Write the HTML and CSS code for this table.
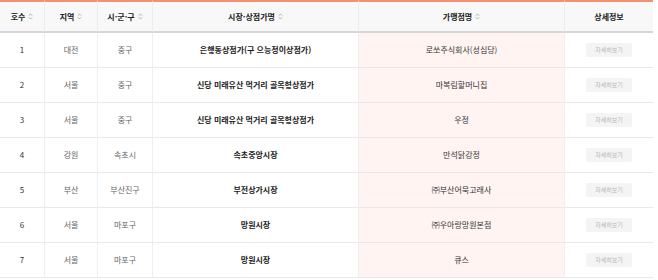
FILE: index.html
```html
<!DOCTYPE html>
<html lang="ko">
<head>
<meta charset="utf-8">
<title>가맹점 목록</title>
<link rel="stylesheet" href="styles.css">
</head>
<body>
<table class="list">
  <colgroup>
    <col class="c-no"><col class="c-area"><col class="c-gu"><col class="c-market"><col class="c-store"><col class="c-info">
  </colgroup>
  <thead>
    <tr>
      <th><span class="th-in">호수<svg class="sort" viewBox="0 0 6 8"><path d="M1 3 L3 1 L5 3 M1 5 L3 7 L5 5"/></svg></span></th>
      <th><span class="th-in">지역<svg class="sort" viewBox="0 0 6 8"><path d="M1 3 L3 1 L5 3 M1 5 L3 7 L5 5"/></svg></span></th>
      <th><span class="th-in">시·군·구<svg class="sort" viewBox="0 0 6 8"><path d="M1 3 L3 1 L5 3 M1 5 L3 7 L5 5"/></svg></span></th>
      <th><span class="th-in">시장·상점가명<svg class="sort" viewBox="0 0 6 8"><path d="M1 3 L3 1 L5 3 M1 5 L3 7 L5 5"/></svg></span></th>
      <th><span class="th-in">가맹점명<svg class="sort" viewBox="0 0 6 8"><path d="M1 3 L3 1 L5 3 M1 5 L3 7 L5 5"/></svg></span></th>
      <th><span class="th-in">상세정보</span></th>
    </tr>
  </thead>
  <tbody>
    <tr><td class="no">1</td><td class="sub">대전</td><td class="sub">중구</td><td class="market">은행동상점가(구 으능정이상점가)</td><td class="store">로쏘주식회사(성심당)</td><td><span class="btn">자세히보기</span></td></tr>
    <tr><td class="no">2</td><td class="sub">서울</td><td class="sub">중구</td><td class="market">신당 미래유산 먹거리 골목형상점가</td><td class="store">마복림할머니집</td><td><span class="btn">자세히보기</span></td></tr>
    <tr><td class="no">3</td><td class="sub">서울</td><td class="sub">중구</td><td class="market">신당 미래유산 먹거리 골목형상점가</td><td class="store">우정</td><td><span class="btn">자세히보기</span></td></tr>
    <tr><td class="no">4</td><td class="sub">강원</td><td class="sub">속초시</td><td class="market">속초중앙시장</td><td class="store">만석닭강정</td><td><span class="btn">자세히보기</span></td></tr>
    <tr><td class="no">5</td><td class="sub">부산</td><td class="sub">부산진구</td><td class="market">부전상가시장</td><td class="store">㈜부산어묵고래사</td><td><span class="btn">자세히보기</span></td></tr>
    <tr><td class="no">6</td><td class="sub">서울</td><td class="sub">마포구</td><td class="market">망원시장</td><td class="store">㈜우아랑망원본점</td><td><span class="btn">자세히보기</span></td></tr>
    <tr><td class="no">7</td><td class="sub">서울</td><td class="sub">마포구</td><td class="market">망원시장</td><td class="store">큐스</td><td><span class="btn">자세히보기</span></td></tr>
  </tbody>
</table>
</body>
</html>
```
FILE: styles.css
```css
html, body {
  margin: 0;
  padding: 0;
  background: #ffffff;
}
body {
  font-family: "Noto Sans CJK KR", "Noto Sans", sans-serif;
  font-size: 8px;
  color: #333333;
  overflow: hidden;
}
.list {
  width: 653px;
  table-layout: fixed;
  border-collapse: separate;
  border-spacing: 0;
}
.c-no { width: 45px; }
.c-area { width: 53px; }
.c-gu { width: 55px; }
.c-market { width: 206px; }
.c-store { width: 206px; }
.c-info { width: 88px; }

.list th {
  height: 29px;
  padding: 0;
  background: #f8f8f9;
  border-top: 2px solid #f3906e;
  border-bottom: 2px solid #d6d6d8;
  border-right: 1px solid #ececee;
  font-weight: 700;
  color: #222222;
  text-align: center;
  vertical-align: middle;
  line-height: 1;
}
.list th:last-child,
.list td:last-child {
  border-right: none;
}
.th-in {
  display: inline-flex;
  align-items: center;
  gap: 3px;
}
.sort {
  width: 5px;
  height: 7px;
  fill: none;
  stroke: #9a9a9a;
  stroke-width: 0.9;
}
.list td {
  height: 34px;
  padding: 0;
  border-bottom: 1px solid #e9e9eb;
  border-right: 1px solid #efeff1;
  text-align: center;
  vertical-align: middle;
  line-height: 1;
  white-space: nowrap;
}
.no { color: #333333; }
.sub { color: #666666; }
.market {
  color: #222222;
  font-weight: 700;
}
.store {
  color: #333333;
  background: #fff4f2;
}
.btn {
  display: inline-flex;
  align-items: center;
  justify-content: center;
  width: 46px;
  height: 14px;
  border-radius: 2px;
  background: #f4f4f5;
  color: #b4b4b4;
  font-size: 6px;
}
```
